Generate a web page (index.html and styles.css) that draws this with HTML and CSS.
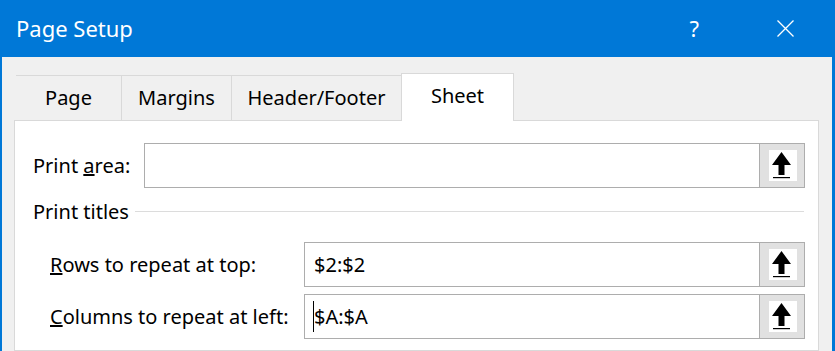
FILE: index.html
```html
<!DOCTYPE html>
<html lang="en">
<head>
    <meta charset="UTF-8">
    <meta name="viewport" content="width=device-width, initial-scale=1.0">
    <title>Page Setup</title>
    <link rel="stylesheet" href="styles.css">
</head>
<body>
    <div class="dialog">
        <div class="titlebar">
            <span class="title">Page Setup</span>
            <span class="help-btn">?</span>
            <span class="close-btn">
                <svg width="17" height="17" viewBox="0 0 17 17">
                    <path d="M0.5 0.5 L16.5 16.5 M16.5 0.5 L0.5 16.5" stroke="#fff" stroke-width="1.3" fill="none"/>
                </svg>
            </span>
        </div>

        <div class="content">
            <div class="tabs">
                <div class="tab tab-page">Page</div>
                <div class="tab tab-margins">Margins</div>
                <div class="tab tab-header">Header/Footer</div>
                <div class="tab tab-sheet active">Sheet</div>
            </div>

            <div class="panel">
                <div class="row">
                    <label class="label label-area">Print <u>a</u>rea:</label>
                    <div class="field">
                        <div class="field-value"></div>
                        <div class="pick-btn">
                            <svg width="28" height="31" viewBox="0 0 28 31">
                                <rect width="28" height="31" fill="#fff"/>
                                <polygon points="12.5,2 22,15 15.5,15 15.5,25 9.5,25 9.5,15 3,15" fill="#000"/>
                                <rect x="4" y="27" width="17" height="1.2" fill="#000"/>
                            </svg>
                        </div>
                    </div>
                </div>

                <div class="section-head">
                    <span>Print titles</span>
                    <div class="section-line"></div>
                </div>

                <div class="title-rows">
                    <div class="row">
                        <label class="label label-titles"><u>R</u>ows to repeat at top:</label>
                        <div class="field">
                            <div class="field-value">$2:$2</div>
                            <div class="pick-btn">
                                <svg width="28" height="31" viewBox="0 0 28 31">
                                    <rect width="28" height="31" fill="#fff"/>
                                    <polygon points="12.5,2 22,15 15.5,15 15.5,25 9.5,25 9.5,15 3,15" fill="#000"/>
                                    <rect x="4" y="27" width="17" height="1.2" fill="#000"/>
                                </svg>
                            </div>
                        </div>
                    </div>
                    <div class="row">
                        <label class="label label-titles"><u>C</u>olumns to repeat at left:</label>
                        <div class="field">
                            <div class="field-value"><span class="caret"></span>$A:$A</div>
                            <div class="pick-btn">
                                <svg width="28" height="31" viewBox="0 0 28 31">
                                    <rect width="28" height="31" fill="#fff"/>
                                    <polygon points="12.5,2 22,15 15.5,15 15.5,25 9.5,25 9.5,15 3,15" fill="#000"/>
                                    <rect x="4" y="27" width="17" height="1.2" fill="#000"/>
                                </svg>
                            </div>
                        </div>
                    </div>
                </div>
            </div>
        </div>
    </div>
</body>
</html>
```

FILE: styles.css
```css
/* Reset */
* {
    margin: 0;
    padding: 0;
    box-sizing: border-box;
}

body {
    font-family: "Noto Sans", "Open Sans", sans-serif;
    font-size: 20px;
    color: #000;
    background-color: #f0f0f0;
    height: 351px;
    overflow: hidden;
}

/* Window frame */
.dialog {
    height: 351px;
    border-left: 2px solid #0078d7;
    border-right: 3px solid #0078d7;
    background-color: #f0f0f0;
    display: flex;
    flex-direction: column;
}

/* Title bar */
.titlebar {
    height: 57px;
    flex-shrink: 0;
    background-color: #0078d7;
    color: #fff;
    display: flex;
    align-items: center;
    padding-left: 14px;
}

.title {
    font-size: 22px;
    flex: 1;
    margin-top: -1px;
}

.help-btn {
    font-size: 22px;
    margin-right: 78px;
    margin-top: -1px;
}

.close-btn {
    display: flex;
    margin-right: 38px;
    margin-top: -1px;
}

/* Tabs + panel */
.content {
    flex: 1;
    padding: 16px 13px 0 12px;
    display: flex;
    flex-direction: column;
}

.tabs {
    display: flex;
    align-items: flex-end;
    height: 47px;
    padding-left: 2px;
}

.tab {
    height: 45px;
    line-height: 44px;
    text-align: center;
    border-top: 1px solid #d9d9d9;
    border-left: 1px solid #d9d9d9;
}

.tab-page {
    width: 105px;
    border-left: none;
}

.tab-margins {
    width: 110px;
}

.tab-header {
    width: 170px;
}

.tab-sheet {
    width: 113px;
}

.tab.active {
    height: 48px;
    line-height: 43px;
    margin-bottom: -1px;
    background-color: #fff;
    border-right: 1px solid #d9d9d9;
    position: relative;
    z-index: 1;
}

.panel {
    flex: 1;
    background-color: #fff;
    border: 1px solid #d9d9d9;
    padding: 22px 13px 0 18px;
}

/* Form rows */
.row {
    display: flex;
    align-items: center;
    height: 45px;
}

.label {
    flex-shrink: 0;
}

.label-area {
    width: 111px;
}

.label-titles {
    width: 254px;
}

.field {
    flex: 1;
    height: 45px;
    display: flex;
    border: 1px solid #adadad;
}

.field-value {
    flex: 1;
    display: flex;
    align-items: center;
    padding-left: 9px;
}

.caret {
    display: inline-block;
    width: 1px;
    height: 31px;
    background-color: #000;
    margin-left: -1px;
}

.pick-btn {
    width: 45px;
    background-color: #e1e1e1;
    border-left: 1px solid #adadad;
    display: flex;
    align-items: center;
    justify-content: center;
    padding-left: 1px;
}

/* Print titles section */
.section-head {
    display: flex;
    align-items: center;
    height: 26px;
    margin-top: 10px;
}

.section-line {
    flex: 1;
    height: 1px;
    background-color: #dcdcdc;
    margin-left: 6px;
    margin-right: 1px;
}

.title-rows {
    padding-left: 17px;
    margin-top: 18px;
    display: flex;
    flex-direction: column;
    gap: 7px;
}
```
